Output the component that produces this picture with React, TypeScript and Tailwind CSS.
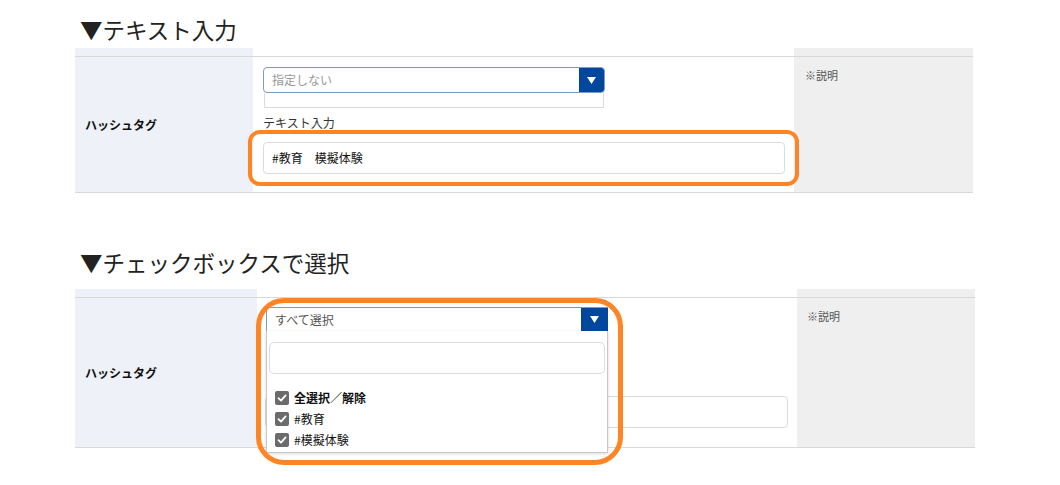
import React from 'react';

const font = { fontFamily: '"Noto Sans CJK JP", "Noto Sans", sans-serif' };

function Arrow() {
  return (
    <svg width="9" height="7" viewBox="0 0 9 7">
      <path d="M0 0 H9 L4.5 7 Z" fill="#fff" />
    </svg>
  );
}

function Check({ label, bold }: { label: string; bold?: boolean }) {
  return (
    <div className="flex items-center h-[21px] gap-[5px]">
      <span className="w-[14px] h-[14px] rounded-[2px] bg-[#6b6b6b] flex items-center justify-center">
        <svg width="10" height="10" viewBox="0 0 10 10">
          <path d="M1.5 5.2 L4 7.6 L8.6 2.4" fill="none" stroke="#fff" strokeWidth="1.8" strokeLinecap="round" strokeLinejoin="round" />
        </svg>
      </span>
      <span className={`text-[12px] text-[#111] ${bold ? 'font-bold' : ''}`}>{label}</span>
    </div>
  );
}

export default function App() {
  return (
    <div className="relative w-[1060px] h-[485px] bg-white overflow-hidden" style={font}>
      {/* テキスト入力 */}
      <div className="pl-[75px]">
        <h2 className="h-[48px] pl-[5px] pt-[16px] text-[22.5px] leading-[26px] text-[#222]">▼テキスト入力</h2>
        <div className="flex w-[898px]">
          <div className="w-[178px] bg-[#eef2f8] pt-[8px]">
            <div className="h-[137px] border-y border-[#d8d8d8] flex items-center pl-[10px]">
              <span className="text-[12px] font-bold text-[#111]">ハッシュタグ</span>
            </div>
          </div>
          <div className="flex-1 pt-[8px]">
            <div className="h-[137px] border-y border-[#d8d8d8] pl-[10px] pt-[10px]">
              <div className="flex w-[342px] h-[26px] border border-[#7b9bc8] rounded-[4px] overflow-hidden">
                <div className="flex-1 pl-[8px] text-[12px] leading-[24px] text-[#999]">指定しない</div>
                <div className="w-[25px] bg-[#00479d] flex items-center justify-center">
                  <Arrow />
                </div>
              </div>
              <div className="ml-[1px] w-[340px] h-[15px] border border-t-0 border-[#dcdcdc]" />
              <div className="mt-[7px] text-[12px] leading-[16px] text-[#333]">テキスト入力</div>
              <div className="mt-[11px] w-[522px] h-[32px] border border-[#dcdcdc] rounded-[4px] pl-[8px] text-[12px] leading-[30px] text-[#111]">
                #教育　模擬体験
              </div>
            </div>
          </div>
          <div className="w-[179px] bg-[#efefef] pt-[8px]">
            <div className="h-[137px] border-y border-[#d8d8d8] pl-[11px] pt-[11px]">
              <div className="text-[11px] leading-[14px] text-[#555]">※説明</div>
            </div>
          </div>
        </div>
      </div>

      {/* チェックボックスで選択 */}
      <div className="pl-[75px]">
        <h2 className="h-[96px] pl-[5px] pt-[56px] text-[22.5px] leading-[26px] text-[#222]">▼チェックボックスで選択</h2>
        <div className="flex w-[900px]">
          <div className="w-[182px] bg-[#eef2f8] pt-[8px]">
            <div className="h-[151px] border-y border-[#d8d8d8] flex items-center pl-[10px]">
              <span className="text-[12px] font-bold text-[#111]">ハッシュタグ</span>
            </div>
          </div>
          <div className="flex-1 pt-[8px]">
            <div className="h-[151px] border-y border-[#d8d8d8] pl-[9px] pt-[9px]">
              <div className="relative w-[342px]">
                <div className="flex h-[24px] border-t border-l border-[#7b9bc8]">
                  <div className="flex-1 pl-[8px] text-[12px] leading-[23px] text-[#555]">すべて選択</div>
                  <div className="w-[27px] bg-[#00479d] flex items-center justify-center">
                    <Arrow />
                  </div>
                </div>
                <div className="absolute left-0 top-[24px] z-10 w-[342px] h-[122px] bg-white border border-t-0 border-[#c8c8c8] shadow-[0_1px_3px_rgba(0,0,0,0.15)]">
                  <div className="mx-[2px] mt-[11px] h-[32px] border border-[#dcdcdc] rounded-[5px]" />
                  <div className="pl-[8px] pt-[13px]">
                    <Check label="全選択／解除" bold />
                    <Check label="#教育" />
                    <Check label="#模擬体験" />
                  </div>
                </div>
              </div>
              <div className="mt-[65px] -ml-[1px] w-[523px] h-[32px] border border-[#dcdcdc] rounded-[4px]" />
            </div>
          </div>
          <div className="w-[178px] bg-[#efefef] pt-[8px]">
            <div className="h-[151px] border-y border-[#d8d8d8] pl-[10px] pt-[11px]">
              <div className="text-[11px] leading-[14px] text-[#555]">※説明</div>
            </div>
          </div>
        </div>
      </div>

      {/* 注釈の枠 */}
      <div className="absolute left-[248px] top-[130px] w-[551px] h-[56px] border-4 border-[#ff8424] rounded-[12px] z-20" />
      <div className="absolute left-[256px] top-[298px] w-[367px] h-[167px] border-[5px] border-[#ff8424] rounded-[28px] z-20" />
    </div>
  );
}
